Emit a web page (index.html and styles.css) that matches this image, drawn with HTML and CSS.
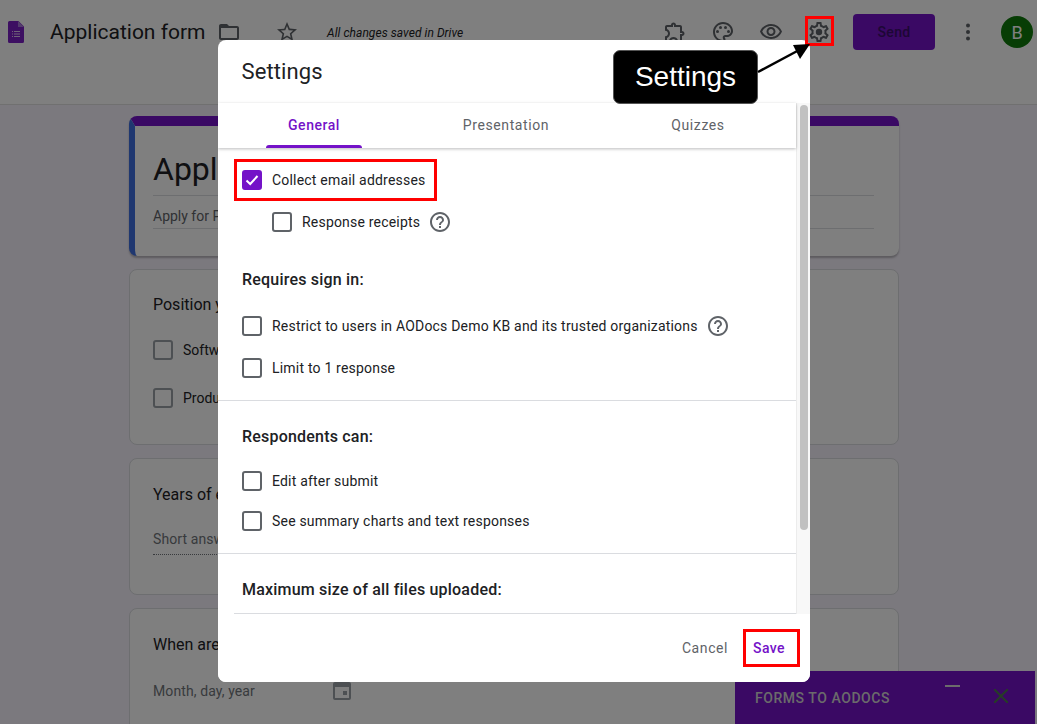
FILE: index.html
```html
<!DOCTYPE html>
<html lang="en">
<head>
<meta charset="utf-8">
<title>Application form</title>
<link rel="stylesheet" href="styles.css">
</head>
<body>
<div class="app">
  <header class="topbar">
    <svg class="doc-icon" viewBox="0 0 16 22"><path fill="#7b1fc4" d="M2 0h8.500L16 5.500V20.500a1.500 1.500 0 0 1-1.500 1.500H1.500A1.500 1.500 0 0 1 0 20.500V1.500A1.500 1.500 0 0 1 1.500 0z"/><path fill="#a678d8" d="M10 0l6 6h-6z"/><path fill="#fff" opacity=".75" d="M4 10h1v1H4zM6 10h6v1H6zM4 12.500h1v1H4zM6 12.500h6v1H6zM4 15h1v1H4zM6 15h6v1H6z"/></svg>
    <h1 class="doc-title">Application form</h1>
    <svg class="icon folder" viewBox="0 0 24 24"><path d="M20 6h-8l-2-2H4c-1.100 0-1.990.9-1.990 2L2 18c0 1.100.9 2 2 2h16c1.100 0 2-.9 2-2V8c0-1.100-.9-2-2-2zm0 12H4V8h16v10z"/></svg>
    <svg class="icon star" viewBox="0 0 24 24"><path d="M22 9.240l-7.190-.62L12 2 9.190 8.630 2 9.240l5.460 4.730L5.820 21 12 17.270 18.180 21l-1.630-7.030L22 9.240zM12 15.400l-3.760 2.270 1-4.280-3.320-2.880 4.380-.38L12 6.100l1.710 4.040 4.380.38-3.320 2.880 1 4.280L12 15.400z"/></svg>
    <span class="saved">All changes saved in Drive</span>
    <div class="top-actions">
      <svg class="icon" viewBox="0 0 24 24"><path d="M10.500 4.500c.28 0 .5.22.5.5v2h6v6h2c.28 0 .5.22.5.5s-.22.5-.5.5h-2v6h-2.120c-.68-1.750-2.390-3-4.380-3s-3.700 1.250-4.380 3H4v-2.120c1.750-.68 3-2.390 3-4.380 0-1.990-1.240-3.700-2.990-4.380L4 7h6V5c0-.28.22-.5.5-.5m0-2C9.120 2.500 8 3.620 8 5H4c-1.100 0-1.990.9-1.990 2v3.800h.29c1.490 0 2.700 1.210 2.700 2.700s-1.210 2.700-2.700 2.700H2V20c0 1.100.9 2 2 2h3.800v-.3c0-1.490 1.210-2.700 2.700-2.700s2.700 1.210 2.700 2.700v.3H17c1.100 0 2-.9 2-2v-4c1.380 0 2.500-1.120 2.500-2.500S20.380 11 19 11V7c0-1.100-.9-2-2-2h-4c0-1.380-1.120-2.500-2.500-2.500z"/></svg>
      <svg class="icon" viewBox="0 0 24 24"><path d="M12 22C6.490 22 2 17.510 2 12S6.490 2 12 2s10 4.040 10 9c0 3.310-2.690 6-6 6h-1.770c-.28 0-.5.22-.5.5 0 .12.05.23.13.33.41.47.64 1.060.64 1.670 0 1.380-1.120 2.500-2.500 2.500zm0-18c-4.410 0-8 3.590-8 8s3.590 8 8 8c.28 0 .5-.22.5-.5 0-.16-.08-.28-.14-.35-.41-.46-.63-1.050-.63-1.650 0-1.380 1.120-2.500 2.500-2.500H16c2.210 0 4-1.790 4-4 0-3.860-3.590-7-8-7z"/><circle cx="6.500" cy="11.500" r="1.500"/><circle cx="9.500" cy="7.500" r="1.500"/><circle cx="14.500" cy="7.500" r="1.500"/><circle cx="17.500" cy="11.500" r="1.500"/></svg>
      <svg class="icon" viewBox="0 0 24 24"><path d="M12 6c3.790 0 7.170 2.130 8.820 5.500C19.170 14.870 15.790 17 12 17s-7.170-2.130-8.820-5.500C4.830 8.130 8.210 6 12 6m0-2C7 4 2.730 7.110 1 11.500 2.730 15.890 7 19 12 19s9.270-3.110 11-7.500C21.270 7.110 17 4 12 4zm0 5c1.380 0 2.500 1.120 2.500 2.500S13.380 14 12 14s-2.500-1.120-2.500-2.500S10.620 9 12 9m0-2c-2.480 0-4.500 2.020-4.500 4.500S9.520 16 12 16s4.500-2.020 4.500-4.500S14.480 7 12 7z"/></svg>
      <svg class="icon gear" viewBox="0 0 24 24"><path d="M19.430 12.980c.04-.32.07-.64.07-.98 0-.34-.03-.66-.07-.98l2.110-1.650c.19-.15.24-.42.12-.64l-2-3.460c-.09-.16-.26-.25-.44-.25-.06 0-.12.01-.17.03l-2.490 1c-.52-.4-1.080-.73-1.690-.98l-.38-2.650C14.460 2.180 14.250 2 14 2h-4c-.25 0-.46.18-.49.42l-.38 2.650c-.61.25-1.170.59-1.690.98l-2.490-1c-.06-.02-.12-.03-.18-.03-.17 0-.34.09-.43.25l-2 3.460c-.13.22-.07.49.12.64l2.110 1.650c-.04.32-.07.65-.07.98 0 .33.03.66.07.98l-2.110 1.650c-.19.15-.24.42-.12.64l2 3.460c.09.16.26.25.44.25.06 0 .12-.01.17-.03l2.490-1c.52.4 1.080.73 1.690.98l.38 2.650c.03.24.24.42.49.42h4c.25 0 .46-.18.49-.42l.38-2.650c.61-.25 1.170-.59 1.690-.98l2.490 1c.06.02.12.03.18.03.17 0 .34-.09.43-.25l2-3.460c.12-.22.07-.49-.12-.64l-2.110-1.650zm-1.980-1.710c.04.31.05.52.05.73 0 .21-.02.43-.05.73l-.14 1.130.89.7 1.080.84-.7 1.210-1.270-.51-1.040-.42-.9.68c-.43.32-.84.56-1.250.73l-1.060.43-.16 1.130-.2 1.350h-1.400l-.19-1.350-.16-1.130-1.060-.43c-.43-.18-.83-.41-1.230-.71l-.91-.7-1.060.43-1.270.51-.7-1.210 1.080-.84.89-.7-.14-1.130c-.03-.31-.05-.54-.05-.74s.02-.43.05-.73l.14-1.130-.89-.7-1.080-.84.7-1.210 1.270.51 1.040.42.9-.68c.43-.32.84-.56 1.250-.73l1.060-.43.16-1.130.2-1.350h1.390l.19 1.350.16 1.130 1.060.43c.43.18.83.41 1.230.71l.91.7 1.060-.43 1.270-.51.7 1.210-1.070.85-.89.7.14 1.130z"/><circle cx="12" cy="12" r="3.200"/></svg>
      <button class="send">Send</button>
      <svg class="icon more" viewBox="0 0 24 24"><circle cx="12" cy="5.500" r="2"/><circle cx="12" cy="12" r="2"/><circle cx="12" cy="18.500" r="2"/></svg>
      <span class="avatar">B</span>
    </div>
  </header>

  <main class="form">
    <section class="card title-card">
      <h2 class="form-title">Application form</h2>
      <p class="form-desc">Apply for Position</p>
    </section>
    <section class="card q-choice">
      <h3 class="q-title">Position you're applying for</h3>
      <div class="choice"><span class="box dim"></span>Software Engineer</div>
      <div class="choice"><span class="box dim"></span>Product Manager</div>
    </section>
    <section class="card q-years">
      <h3 class="q-title">Years of experience</h3>
      <p class="q-hint dotted">Short answer text</p>
    </section>
    <section class="card q-date">
      <h3 class="q-title">When are you available to start?</h3>
      <div class="date-row">
        <span class="q-hint date-hint">Month, day, year</span>
        <svg class="icon cal" viewBox="0 0 18 18"><path d="M2 0h14a2 2 0 0 1 2 2v14a2 2 0 0 1-2 2H2a2 2 0 0 1-2-2V2a2 2 0 0 1 2-2zm0 5v11h14V5zm8 4h4v4h-4z" fill-rule="evenodd"/></svg>
      </div>
    </section>
  </main>

  <aside class="addon">
    <span class="addon-name">FORMS TO AODOCS</span>
    <span class="addon-min"></span>
    <svg class="addon-x" viewBox="0 0 14 14"><path d="M0 0l14 14M14 0L0 14"/></svg>
  </aside>

  <div class="scrim"></div>

  <div class="modal">
    <h2 class="modal-title">Settings</h2>
    <div class="modal-scroll">
      <div class="modal-main">
        <nav class="tabs">
          <span class="tab active">General</span>
          <span class="tab">Presentation</span>
          <span class="tab">Quizzes</span>
        </nav>
        <div class="modal-body">
          <div class="row first"><span class="box checked"><svg viewBox="0 0 20 20"><path d="M4.500 10.500l3.700 3.500 7.300-8"/></svg></span>Collect email addresses</div>
          <div class="row sub"><span class="box"></span>Response receipts<svg class="help" viewBox="0 0 24 24"><path d="M11 18h2v-2h-2v2zm1-16C6.480 2 2 6.480 2 12s4.480 10 10 10 10-4.480 10-10S17.520 2 12 2zm0 18c-4.410 0-8-3.590-8-8s3.590-8 8-8 8 3.590 8 8-3.590 8-8 8zm0-14c-2.210 0-4 1.790-4 4h2c0-1.100.9-2 2-2s2 .9 2 2c0 2-3 1.750-3 5h2c0-2.250 3-2.500 3-5 0-2.210-1.790-4-4-4z"/></svg></div>
          <h3 class="group-title signin">Requires sign in:</h3>
          <div class="row r1"><span class="box"></span>Restrict to users in AODocs Demo KB and its trusted organizations<svg class="help" viewBox="0 0 24 24"><path d="M11 18h2v-2h-2v2zm1-16C6.480 2 2 6.480 2 12s4.480 10 10 10 10-4.480 10-10S17.520 2 12 2zm0 18c-4.410 0-8-3.590-8-8s3.590-8 8-8 8 3.590 8 8-3.590 8-8 8zm0-14c-2.210 0-4 1.790-4 4h2c0-1.100.9-2 2-2s2 .9 2 2c0 2-3 1.750-3 5h2c0-2.250 3-2.500 3-5 0-2.210-1.790-4-4-4z"/></svg></div>
          <div class="row r2"><span class="box"></span>Limit to 1 response</div>
          <hr class="divider d1">
          <h3 class="group-title can">Respondents can:</h3>
          <div class="row r3"><span class="box"></span>Edit after submit</div>
          <div class="row r4"><span class="box"></span>See summary charts and text responses</div>
          <hr class="divider d2">
          <h3 class="group-title size">Maximum size of all files uploaded:</h3>
          <hr class="divider d3">
        </div>
      </div>
      <div class="scrollbar"><span class="thumb"></span></div>
    </div>
    <footer class="modal-foot">
      <button class="btn cancel">Cancel</button>
      <button class="btn save">Save</button>
    </footer>
  </div>

  <span class="mark mark-gear"></span>
  <span class="mark mark-collect"></span>
  <span class="mark mark-save"></span>
  <div class="callout">Settings</div>
  <svg class="arrow" viewBox="0 0 60 40"><path class="arrow-line" d="M3 30L46 7"/><path class="arrow-head" d="M55 2L38 3l7 14z"/></svg>
</div>
</body>
</html>
```
FILE: styles.css
```css
* { box-sizing: border-box; }
html, body { margin: 0; padding: 0; }
body { font-family: Roboto, "Liberation Sans", sans-serif; color: #202124; }
h1, h2, h3, p { margin: 0; font-weight: 400; }
button { font: inherit; border: 0; background: none; padding: 0; }

.app { position: relative; width: 1037px; height: 724px; overflow: hidden; background: #f6f2fc; }

/* top bar */
.topbar { height: 105px; background: #fff; border-bottom: 1px solid #e0e0e0; display: flex; align-items: flex-start; padding: 21px 4px 0 8px; }
.doc-icon { width: 16px; height: 22px; flex: none; }
.doc-title { font-size: 21px; line-height: 22px; margin-left: 26px; width: 167px; flex: none; }
.icon { width: 24px; height: 24px; fill: #5f6368; flex: none; }
.folder { margin-top: -1px; }
.star { margin-left: 34px; margin-top: -1px; }
.saved { font-size: 12px; font-style: italic; margin-left: 28px; line-height: 24px; margin-top: 0; letter-spacing: .05px; color: #202124; }
.top-actions { margin-left: auto; display: flex; align-items: center; margin-top: -7px; }
.top-actions .icon { margin-right: 24px; }
.top-actions .gear { margin-right: 22px; }
.top-actions .more { margin: 0 21px 0 0; }
.send { width: 82px; height: 36px; border-radius: 4px; background: #7412c8; color: #3a0f6a; font-size: 14px; font-weight: 500; margin-right: 21px; letter-spacing: .3px; }
.avatar { width: 32px; height: 32px; border-radius: 50%; background: #0f7a0a; color: #fff; display: flex; align-items: center; justify-content: center; font-size: 18px; }

/* form */
.form { width: 770px; margin: 11px 0 0 129px; display: flex; flex-direction: column; gap: 13px; }
.card { background: #fff; border: 1px solid #dadce0; border-radius: 8px; padding: 0 24px 0 23px; flex: none; }
.title-card { height: 140px; border: 0; border-top: 10px solid #7412c8; border-left: 6px solid #3f6fe0; padding: 23px 25px 0 18px; box-shadow: 0 2px 2px rgba(0,0,0,.25); }
.form-title { font-size: 32px; line-height: 40px; padding-bottom: 6px; border-bottom: 1px solid #dadce0; height: 47px; }
.form-desc { font-size: 14px; line-height: 20px; padding: 10px 0 2px; border-bottom: 1px solid #dadce0; color: #5f6368; height: 33px; }
.q-choice { height: 176px; padding-top: 25px; }
.q-years { height: 137px; padding-top: 26px; }
.q-date { height: 140px; padding-top: 26px; }
.q-title { font-size: 16px; line-height: 20px; }
.choice { display: flex; align-items: center; font-size: 14px; height: 20px; gap: 10px; color: #202124; margin-top: 25px; }
.choice + .choice { margin-top: 28px; }
.q-hint { font-size: 14px; line-height: 20px; color: #70757a; letter-spacing: .1px; }
.dotted { margin-top: 24px; width: 300px; padding-bottom: 5px; border-bottom: 1px dotted #70757a; }
.date-row { display: flex; align-items: center; margin-top: 26px; }
.date-hint { width: 180px; }
.cal { width: 18px; height: 18px; fill: #9aa0a6; }

/* add-on panel */
.addon { position: absolute; left: 735px; top: 671px; width: 300px; height: 53px; background: #7412c8; display: flex; align-items: center; padding: 0 0 0 20px; }
.addon-name { color: #d6d6d6; font-size: 14px; font-weight: 500; letter-spacing: .55px; width: 190px; }
.addon-min { width: 15px; height: 2px; background: #d8d8d8; margin-top: -24px; }
.addon-x { width: 14px; height: 14px; margin: -3px 0 0 34px; fill: none; stroke: #4d7a4d; stroke-width: 2; }

.scrim { position: absolute; inset: 0; background: rgba(0,0,0,.5); }

/* modal */
.modal { position: absolute; left: 218px; top: 40px; width: 592px; height: 642px; background: #fff; border-radius: 8px; display: flex; flex-direction: column; overflow: hidden; }
.modal-title { font-size: 22px; line-height: 28px; padding: 18px 24px 0 23.500px; height: 63px; letter-spacing: .1px; flex: none; color: #202124; }
.modal-scroll { display: flex; height: 511px; flex: none; }
.modal-main { width: 578px; flex: none; display: flex; flex-direction: column; }
.tabs { height: 45px; display: flex; flex: none; box-shadow: 0 1px 3px rgba(60,64,67,.35); position: relative; z-index: 1; }
.tab { width: 192px; display: flex; justify-content: center; padding-top: 14px; font-size: 14px; font-weight: 400; letter-spacing: .6px; color: #5f6368; position: relative; }
.tab.active { color: #7412c8; font-weight: 500; letter-spacing: .55px; }
.tab.active::after { content: ""; position: absolute; left: 48px; bottom: 0; width: 96px; height: 3px; background: #7412c8; border-radius: 3px 3px 0 0; }

.modal-body { flex: 1; overflow: hidden; }
.scrollbar { width: 14px; background: #f8f8f8; border-left: 1px solid #ececec; padding: 2px 3px; flex: none; }
.thumb { display: block; width: 8px; height: 425px; border-radius: 4px; background: #c1c1c1; }

.box { width: 20px; height: 20px; border: 2px solid #5f6368; border-radius: 3px; flex: none; display: block; background: #fff; }
.box.dim { background: transparent; border-color: #9aa0a6; }
.box.checked { background: #7412c8; border-color: #7412c8; position: relative; }
.box.checked svg { position: absolute; left: -2px; top: -2px; width: 20px; height: 20px; fill: none; stroke: #fff; stroke-width: 2; }

.row { display: flex; align-items: center; height: 20px; padding-left: 24px; gap: 10px; font-size: 14px; letter-spacing: .2px; color: #202124; }
.row.sub { padding-left: 54px; }
.help { width: 24px; height: 24px; fill: #5f6368; flex: none; margin-left: -2px; }
.first { margin-top: 22px; }
.sub { margin-top: 22px; }
.group-title { font-size: 16px; line-height: 20px; font-weight: 500; padding-left: 24px; letter-spacing: .2px; color: #202124; }
.signin { margin-top: 38px; }
.r1 { margin-top: 26px; }
.r2 { margin-top: 22px; }
.divider { border: 0; height: 1px; background: #dadce0; margin: 0; }
.d1 { margin-top: 22px; }
.can { margin-top: 26px; }
.r3 { margin-top: 24px; }
.r4 { margin-top: 20px; }
.d2 { margin-top: 22px; }
.size { margin-top: 26px; }
.d3 { margin: 13px 0 0 16px; }

.modal-foot { flex: 1; display: flex; justify-content: flex-end; align-items: center; padding: 0 25px 0 0; background: #fff; gap: 25px; }
.btn { font-size: 14px; font-weight: 400; letter-spacing: .6px; color: #5f6368; }
.btn.save { color: #7412c8; font-weight: 500; letter-spacing: .4px; }

/* annotations */
.mark { position: absolute; border: 3px solid #f00; }
.mark-gear { left: 805px; top: 16px; width: 29px; height: 30px; }
.mark-collect { left: 234px; top: 159px; width: 203px; height: 42px; }
.mark-save { left: 743px; top: 629px; width: 57px; height: 38px; }
.callout { position: absolute; left: 613px; top: 50px; width: 145px; height: 54px; background: #000; border: 1px solid #555; border-radius: 7px; color: #fff; font-family: "Liberation Sans", Arial, sans-serif; font-size: 28px; display: flex; align-items: center; justify-content: center; }
.arrow { position: absolute; left: 755px; top: 42px; width: 60px; height: 40px; }
.arrow-line { stroke: #000; stroke-width: 2.500; fill: none; }
.arrow-head { fill: #000; }
```
